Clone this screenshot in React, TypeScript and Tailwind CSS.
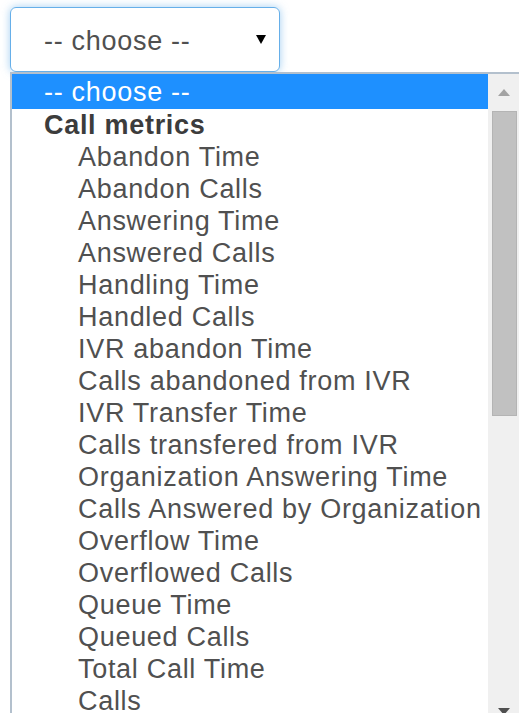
import React from "react";

type Option = { label: string; group?: boolean; indent?: boolean };

const options: Option[] = [
  { label: "-- choose --" },
  { label: "Call metrics", group: true },
  { label: "Abandon Time", indent: true },
  { label: "Abandon Calls", indent: true },
  { label: "Answering Time", indent: true },
  { label: "Answered Calls", indent: true },
  { label: "Handling Time", indent: true },
  { label: "Handled Calls", indent: true },
  { label: "IVR abandon Time", indent: true },
  { label: "Calls abandoned from IVR", indent: true },
  { label: "IVR Transfer Time", indent: true },
  { label: "Calls transfered from IVR", indent: true },
  { label: "Organization Answering Time", indent: true },
  { label: "Calls Answered by Organization", indent: true },
  { label: "Overflow Time", indent: true },
  { label: "Overflowed Calls", indent: true },
  { label: "Queue Time", indent: true },
  { label: "Queued Calls", indent: true },
  { label: "Total Call Time", indent: true },
  { label: "Calls", indent: true },
];

function Scrollbar() {
  return (
    <div className="flex w-[31px] shrink-0 flex-col bg-[#f0f0f0]">
      {/* up arrow */}
      <div className="flex h-[37px] items-center justify-center">
        <svg width="12" height="7" viewBox="0 0 12 7">
          <path d="M6 0 L12 7 L0 7 Z" fill="#a3a3a3" />
        </svg>
      </div>
      {/* thumb */}
      <div className="ml-[4px] h-[305px] w-[25px] border border-[#b4b4b4] bg-[#c1c1c1]" />
      <div className="flex-1" />
      {/* down arrow */}
      <div className="flex h-[30px] items-start justify-center pt-[6px]">
        <svg width="12" height="7" viewBox="0 0 12 7">
          <path d="M0 0 L12 0 L6 7 Z" fill="#505050" />
        </svg>
      </div>
    </div>
  );
}

export default function App() {
  return (
    <div
      className="h-[713px] overflow-hidden bg-white pl-[10px] pt-[7px] text-[27px] tracking-[0.7px] text-[#505050]"
      style={{ fontFamily: '"Liberation Sans", Arial, sans-serif' }}
    >
      {/* Select control */}
      <div className="flex h-[65px] w-[270px] items-center justify-between rounded-[6px] border border-[#66afe9] pl-[33px] pr-[13px] pt-[3px] shadow-[0_0_8px_rgba(102,175,233,0.6)]">
        <span className="leading-none">-- choose --</span>
        <svg width="10" height="9" viewBox="0 0 10 9" className="-mt-[3px]">
          <path d="M0 0 L10 0 L5 9 Z" fill="#000" />
        </svg>
      </div>

      {/* Open option list */}
      <div className="flex h-[660px] border-l-2 border-t-2 border-[#b3c0cd]">
        <div className="flex-1">
          {options.map((o, i) => (
            <div
              key={o.label}
              className={`whitespace-nowrap ${
                i === 0
                  ? "h-[35px] bg-[#1e90ff] pt-[2px] leading-[32px] text-white"
                  : "h-[32px] leading-[32px]"
              } ${o.group ? "font-bold text-[#3c3c3c]" : ""} ${
                o.indent ? "pl-[66px]" : "pl-[32px]"
              }`}
            >
              {o.label}
            </div>
          ))}
        </div>
        <Scrollbar />
      </div>
    </div>
  );
}
